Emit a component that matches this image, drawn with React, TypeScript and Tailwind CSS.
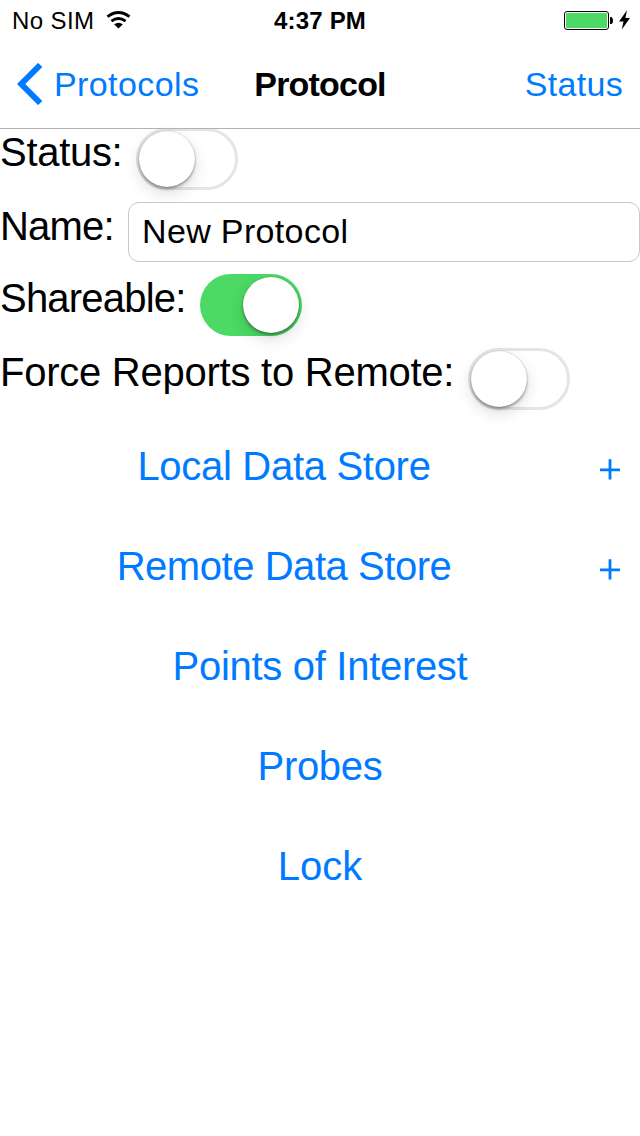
import { useState } from "react";

function Toggle({ initial = false, label }: { initial?: boolean; label: string }) {
  const [on, setOn] = useState(initial);
  return (
    <button
      type="button"
      role="switch"
      aria-checked={on}
      aria-label={label}
      onClick={() => setOn(!on)}
      className={
        on
          ? "flex h-[62px] w-[102px] shrink-0 items-center justify-end rounded-full bg-[#4cd964] pr-[3px]"
          : "flex h-[62px] w-[102px] shrink-0 items-center justify-start rounded-full border-[3px] border-[#e5e5e5] bg-white"
      }
    >
      <span className="size-[56px] rounded-full bg-white shadow-[0_0_1px_rgba(0,0,0,0.3),0_2px_3px_rgba(0,0,0,0.35),0_6px_16px_rgba(0,0,0,0.14)]" />
    </button>
  );
}

function StatusBar() {
  return (
    <div className="flex h-10 items-center text-[24px] leading-[39px] text-black">
      <div className="flex w-[220px] items-center pl-3">
        <span className="w-[94px] pt-px whitespace-nowrap tracking-[0.4px]">No SIM</span>
        <svg width="26" height="18" viewBox="0 0 26 18" fill="none" stroke="#000">
          <path d="M1.500 5.700Q12.500 -2.600 23.500 5.700" strokeWidth="2.900" />
          <path d="M5.400 10.200Q12.500 4.900 19.600 10.200" strokeWidth="2.800" />
          <path d="M12.500 17.600 8.100 13.300Q12.500 10.200 16.900 13.300Z" fill="#000" stroke="none" />
        </svg>
      </div>
      <div className="w-[200px] pt-px text-center font-bold tracking-[0.200px]">4:37 PM</div>
      <div className="flex flex-1 items-center justify-end pr-[9px]">
        <svg width="68" height="22" viewBox="0 0 68 22">
          <rect x="1.5" y="2.5" width="44" height="18" rx="2.5" fill="#fff" stroke="#000" />
          <rect x="3" y="4" width="41" height="15" rx="1" fill="#4cd964" />
          <path d="M47 8h1.500q1.500 1 1.500 3.500t-1.500 3.500H47Z" fill="#000" />
          <path d="M64 1.200 56 12.600h4.500L58.800 20.500 67 9h-4.600Z" fill="#000" />
        </svg>
      </div>
    </div>
  );
}

function NavBar() {
  return (
    <div className="grid h-[89px] grid-cols-[220px_200px_220px] border-b border-[#b2b2b2] text-[34px] leading-[88px]">
      <button type="button" className="flex items-center pl-[17px] text-[#007aff]">
        <svg width="26" height="42" viewBox="0 0 26 42" fill="none" stroke="#007aff" strokeWidth="6">
          <path d="M23.200 2 4.200 21 23.200 40" />
        </svg>
        <span className="ml-[11px] tracking-[0.400px]">Protocols</span>
      </button>
      <h1 className="text-center font-bold tracking-[-0.800px] text-black">Protocol</h1>
      <button type="button" className="pr-[17px] text-right tracking-[0.300px] text-[#007aff]">Status</button>
    </div>
  );
}

function PlusIcon() {
  return (
    <svg width="20" height="22" viewBox="0 0 20 22" stroke="#007aff" strokeWidth="2.800">
      <path d="M0 11.800h20M10 1.200v20.300" />
    </svg>
  );
}

export default function App() {
  return (
    <div className="min-h-[1136px] w-[640px] overflow-hidden bg-white font-['Liberation_Sans',Arial,sans-serif] text-black">
      <header className="relative z-10">
        <StatusBar />
        <NavBar />
      </header>

      <main className="-mt-px text-[40px]">
        <div className="flex flex-col gap-3 leading-[48px] whitespace-nowrap">
          <div className="flex h-[62px]">
            <span className="w-[136px] tracking-[-0.300px]">Status:</span>
            <Toggle label="Status" />
          </div>
          <div className="flex h-[60px]">
            <span className="w-[128px] shrink-0 tracking-[-0.800px]">Name:</span>
            <input
              aria-label="Name"
              defaultValue="New Protocol"
              className="h-[60px] min-w-0 flex-1 rounded-[11px] border border-[#c8c8c8] bg-white px-[13px] pb-[2px] text-[34px] tracking-[0.350px] outline-none"
            />
          </div>
          <div className="flex h-[62px]">
            <span className="w-[200px] tracking-[-0.800px]">Shareable:</span>
            <Toggle label="Shareable" initial />
          </div>
          <div className="flex h-[62px]">
            <span className="w-[468px] tracking-[-0.250px]">Force Reports to Remote:</span>
            <Toggle label="Force Reports to Remote" />
          </div>
        </div>

        <div className="mt-[6px] leading-[100px] tracking-[-0.300px] whitespace-nowrap text-[#007aff]">
          <div className="flex h-[100px]">
            <button type="button" className="w-[568px] text-center">Local Data Store</button>
            <button type="button" aria-label="Add local data store" className="flex flex-1 items-center pt-[6px] pl-8">
              <PlusIcon />
            </button>
          </div>
          <div className="flex h-[100px]">
            <button type="button" className="w-[568px] text-center tracking-[-0.450px]">Remote Data Store</button>
            <button type="button" aria-label="Add remote data store" className="flex flex-1 items-center pt-[6px] pl-8">
              <PlusIcon />
            </button>
          </div>
          <button type="button" className="block h-[100px] w-full">Points of Interest</button>
          <button type="button" className="block h-[100px] w-full">Probes</button>
          <button type="button" className="block h-[100px] w-full tracking-normal">Lock</button>
        </div>
      </main>
    </div>
  );
}
